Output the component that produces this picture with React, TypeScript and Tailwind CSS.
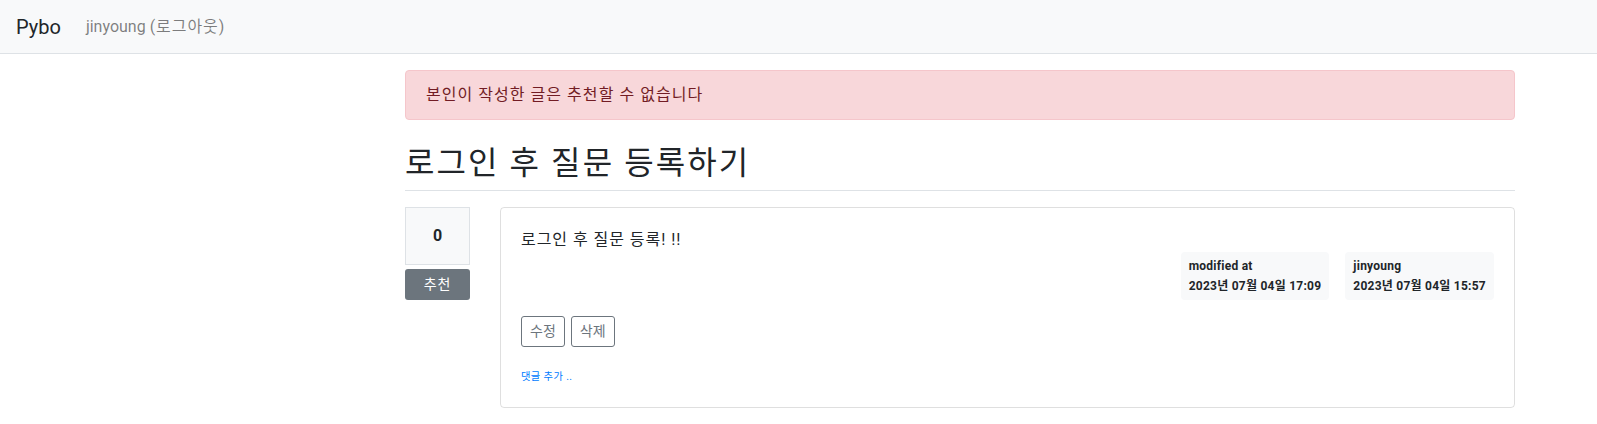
export default function App() {
  const font = "font-['Roboto','Noto_Sans_CJK_KR',sans-serif]";

  return (
    <div className={`min-h-[424px] bg-white text-[16px] leading-[1.5] text-[#212529] ${font}`}>
      {/* navbar */}
      <nav className="flex h-[54px] items-center border-b border-[#dee2e6] bg-[#f8f9fa] px-4">
        <a className="mr-[25px] text-[20px] text-[#212529]">Pybo</a>
        <a className="text-[16px] text-[rgba(0,0,0,0.5)]">
          jinyoung <span className="tracking-[0.06em]">(로그아웃)</span>
        </a>
      </nav>

      <div className="mt-4 ml-[390px] w-[1140px] px-[15px]">
        <div className="mb-4 rounded-[4px] border border-[#f5c6cb] bg-[#f8d7da] px-5 py-3 tracking-[0.065em] text-[#721c24]">
          본인이 작성한 글은 추천할 수 없습니다
        </div>

        <h2 className="border-b border-[#dee2e6] py-2 text-[32px] leading-[1.2] font-normal tracking-[0.065em]">
          로그인 후 질문 등록하기
        </h2>

        <div className="mt-4 flex gap-[30px]">
          <div className="flex w-[65px] flex-col">
            <div className="mb-1 border border-[#dee2e6] bg-[#f8f9fa] p-4 text-center font-bold">0</div>
            <button className="h-[31px] rounded-[3px] bg-[#6c757d] text-[14px] tracking-[0.06em] text-white">추천</button>
          </div>

          <div className="flex-1 rounded-[4px] border border-[rgba(0,0,0,0.125)]">
            <div className="p-5">
              <div className="whitespace-pre-line tracking-[0.06em]">로그인 후 질문 등록! !!</div>
              <div className="flex justify-end gap-4">
                <div className="rounded-[4px] bg-[#f8f9fa] p-2 text-left text-[12px] leading-none font-bold tracking-[0.02em]">
                  <div className="mb-2">modified at</div>
                  <div>2023년 07월 04일 17:09</div>
                </div>
                <div className="rounded-[4px] bg-[#f8f9fa] p-2 text-left text-[12px] leading-none font-bold tracking-[0.02em]">
                  <div className="mb-2">jinyoung</div>
                  <div>2023년 07월 04일 15:57</div>
                </div>
              </div>
              <div className="my-4 flex gap-[6px]">
                <button className="h-[31px] rounded-[3px] border border-[#6c757d] px-2 text-[14px] text-[#6c757d]">수정</button>
                <button className="h-[31px] rounded-[3px] border border-[#6c757d] px-2 text-[14px] text-[#6c757d]">삭제</button>
              </div>
              <div className="h-[24px]">
                <a className="text-[10.24px] tracking-[0.04em] text-[#007bff]">댓글 추가 ..</a>
              </div>
            </div>
          </div>
        </div>
      </div>
    </div>
  );
}
